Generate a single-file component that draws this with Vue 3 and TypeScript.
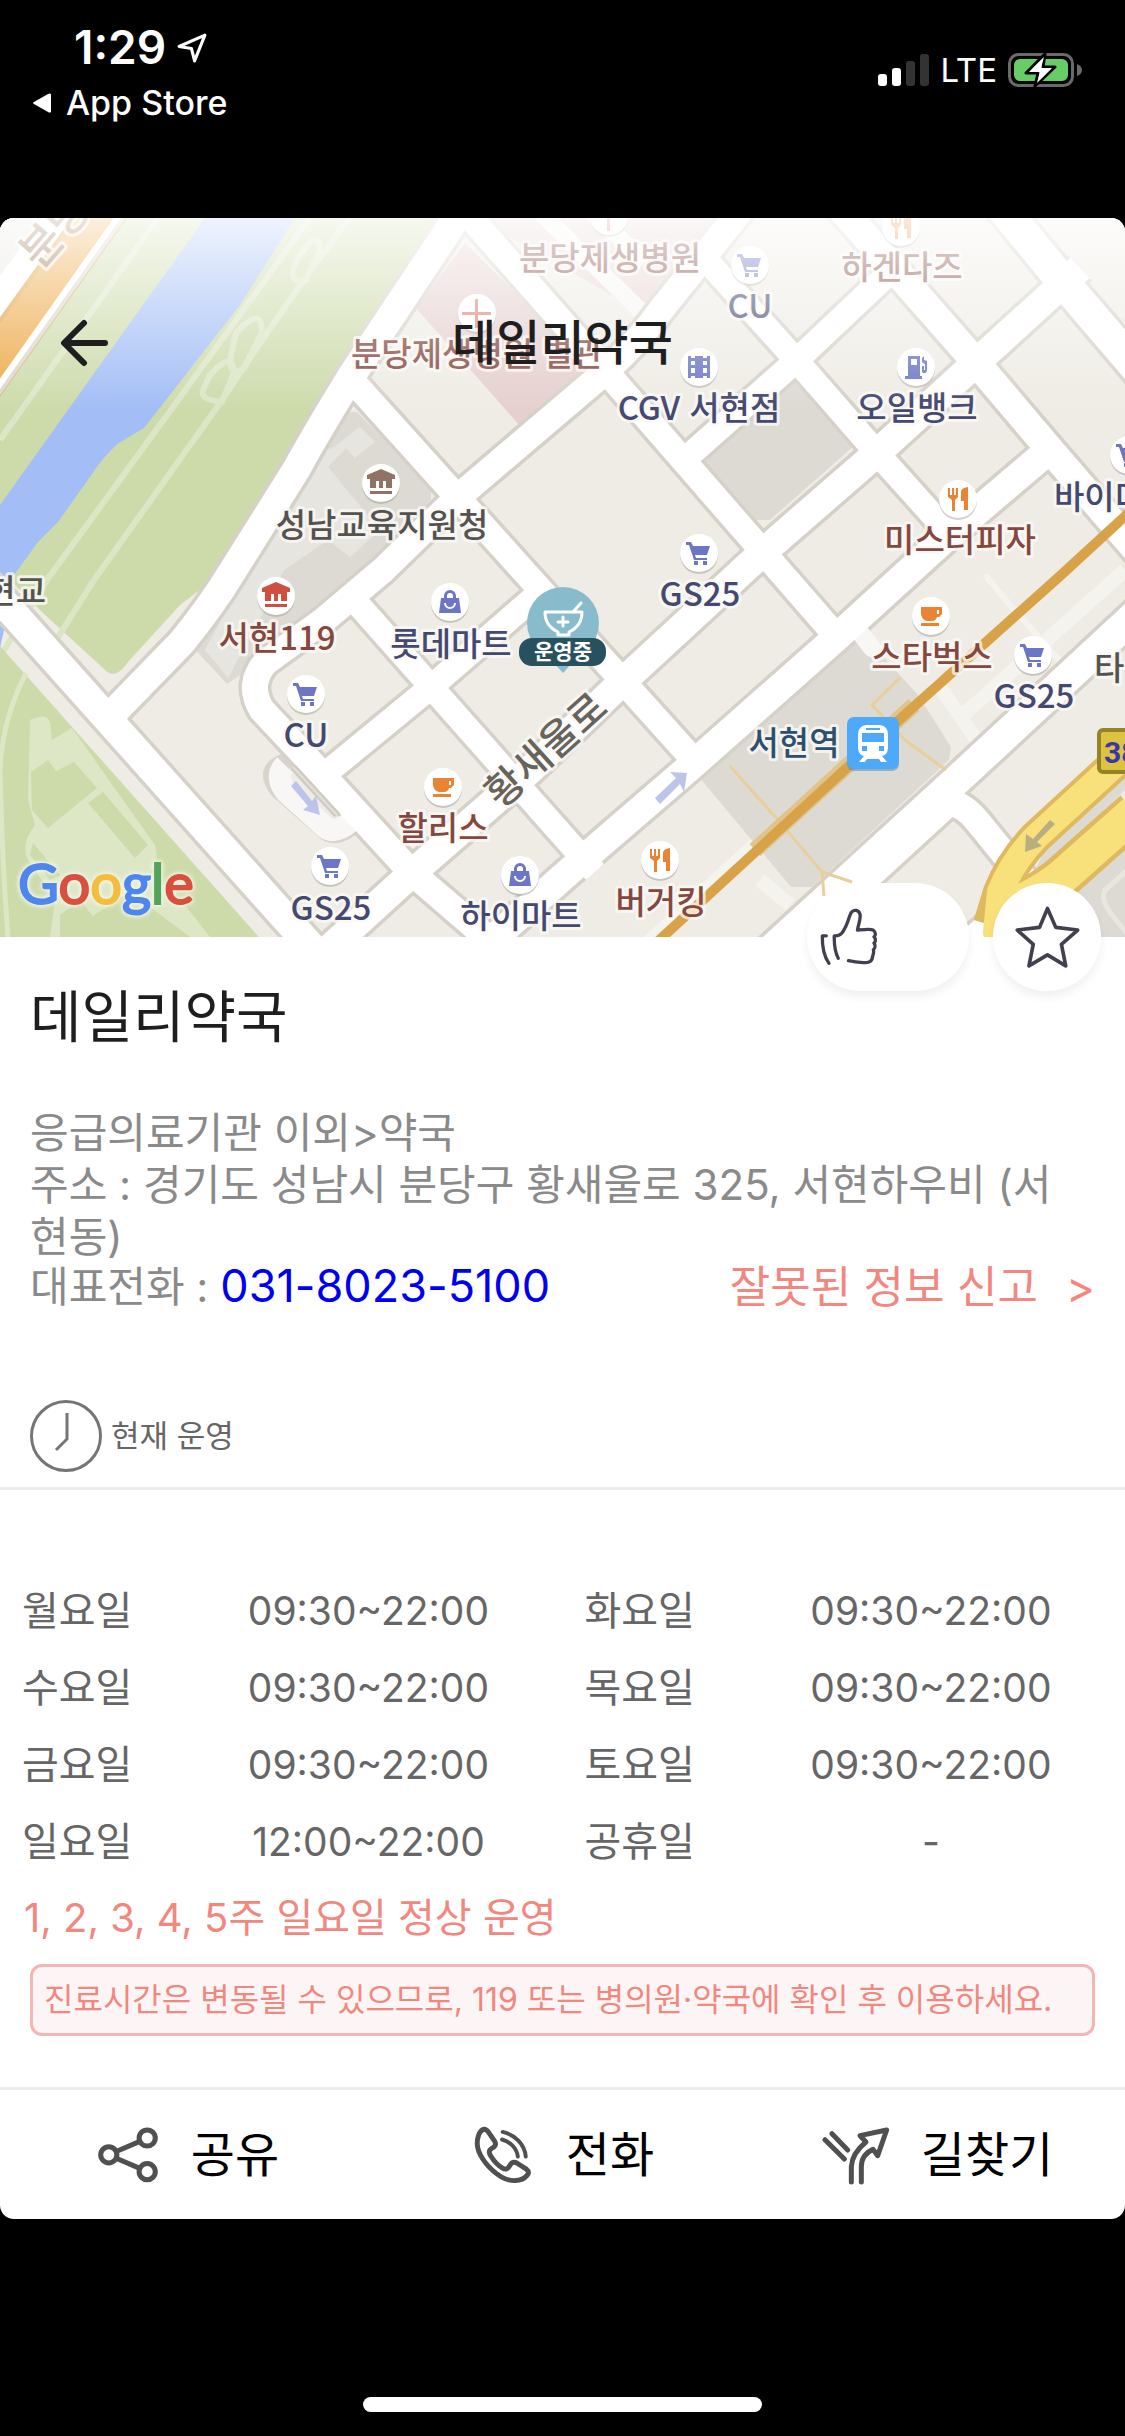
<script setup lang="ts">
type Kind = 'cart' | 'bag' | 'cup' | 'fork' | 'museum' | 'cross' | 'film' | 'gas'

interface Road {
  d: string
  w: number
}
interface Poi {
  kind: Kind
  x: number
  y: number
  color: string
}
interface Label {
  text: string
  x: number
  y: number
  color: string
  anchor?: 'start' | 'middle' | 'end'
}
interface DayHours {
  day: string
  time: string
}

const VIOLET = '#6c76c4'
const ORANGE = '#e98434'
const NAVY = '#45486f'
const BROWN = '#84483f'
const GRAY = '#55534e'

const icons: Record<Kind, string> = {
  cart: 'M-13-11h5l2 4h17l-3 9h-12l1 3h11v2h-13l-5-15h-3zM-5 8h4v4h-4zM4 8h4v4h-4z',
  bag: 'M-9-4h3v-2a6 6 0 0 1 12 0v2h3l2 15h-22zM-3-4h6v-2a3 3 0 0 0-6 0zM-6 1a6 6 0 0 0 12 0h-2a4 4 0 0 1-8 0z',
  cup: 'M-10-9h21v7l-3 3h-2q-1 4-5 4h-5q-5-1-6-7zM6-6v4h2v-4zM-10 7h18v3h-18z',
  fork: 'M-10-11h2v7h2v-7h2v7h2v-7h2v9l-3 3v11h-3v-11l-4-3zM10-12v23h-4v-9h-3v-9q0-4 7-5z',
  museum: 'M-14-8L0-14L14-8V-4H11V5H5V-2H2V5H-2V-2H-5V5H-11V-4H-14zM-11 8h22v3h-22z',
  cross: 'M-2-14h3v13h13v3h-13v13h-3v-13h-13v-3h13z',
  film: 'M-11-11h3v2h4v-2h8v2h4v-2h3v22h-3v-2h-4v2h-8v-2h-4v2h-3zM-8-6v4h4v-4zM-8 1v5h4v-5zM4-6v4h4v-4zM4 1v5h4v-5z',
  gas: 'M-8-11h12v20h2v3h-17v-3h3zM-5-8v6h6v-6zM6-9l2-2v4l3 1v10q-2 4-5 1v-6h2v4h1v-6l-3-2z',
}

const roads: Road[] = [
  { d: 'M465 205L352 375Q318 430 296 470L232 572Q212 605 182 642L114 712', w: 28 },
  { d: 'M-20 576L330 968', w: 29 },
  { d: 'M462 208L610 376L837 637', w: 25 },
  { d: 'M350 378L700 767', w: 25 },
  { d: 'M745 205L661 310Q640 340 605 372L458 497L383 570L324 620L266 662Q246 684 262 710L306 757L411 872L490 940', w: 26 },
  { d: 'M1080 268L877 453L762 553L619 685L528 772L411 874L310 966', w: 28 },
  { d: 'M330 770L431 687L545 588', w: 24 },
  { d: 'M356 602L595 872', w: 24 },
  { d: 'M1041 457L949 535L837 637L690 767L582 860L475 955', w: 28 },
  { d: 'M700 253L796 360L877 453L955 540', w: 24 },
  { d: 'M838 205L974 360L1046 445L1145 560', w: 28 },
  { d: 'M684 460L796 361L890 272', w: 24 },
  { d: 'M1000 205L1064 283L1140 372', w: 32 },
  { d: 'M1145 606L958 779L760 960', w: 30 },
  { d: 'M950 795L770 960', w: 36 },
  { d: 'M945 800Q965 805 978 822L1030 886', w: 26 },
  { d: 'M1040 880L960 950', w: 26 },
]

const pois: Poi[] = [
  { kind: 'cross', x: 609, y: 216, color: '#df8078' },
  { kind: 'cross', x: 477, y: 313, color: '#df8078' },
  { kind: 'cart', x: 750, y: 265, color: VIOLET },
  { kind: 'fork', x: 901, y: 227, color: ORANGE },
  { kind: 'film', x: 699, y: 367, color: VIOLET },
  { kind: 'gas', x: 916, y: 367, color: VIOLET },
  { kind: 'museum', x: 381, y: 483, color: '#917366' },
  { kind: 'fork', x: 958, y: 499, color: ORANGE },
  { kind: 'cart', x: 1129, y: 455, color: VIOLET },
  { kind: 'cart', x: 699, y: 553, color: VIOLET },
  { kind: 'museum', x: 276, y: 596, color: '#d0503f' },
  { kind: 'bag', x: 450, y: 602, color: VIOLET },
  { kind: 'cup', x: 931, y: 616, color: ORANGE },
  { kind: 'cart', x: 1033, y: 655, color: VIOLET },
  { kind: 'cart', x: 306, y: 694, color: VIOLET },
  { kind: 'cup', x: 443, y: 787, color: ORANGE },
  { kind: 'fork', x: 660, y: 860, color: ORANGE },
  { kind: 'cart', x: 330, y: 866, color: VIOLET },
  { kind: 'bag', x: 520, y: 875, color: VIOLET },
]

const labels: Label[] = [
  { text: '분당제생병원', x: 610, y: 270, color: BROWN },
  { text: '하겐다즈', x: 902, y: 279, color: BROWN },
  { text: 'CU', x: 750, y: 318, color: NAVY },
  { text: '분당제생병원 별관', x: 477, y: 366, color: BROWN },
  { text: 'CGV 서현점', x: 699, y: 420, color: NAVY },
  { text: '오일뱅크', x: 917, y: 420, color: NAVY },
  { text: '바이더', x: 1054, y: 509, color: NAVY, anchor: 'start' },
  { text: '성남교육지원청', x: 382, y: 537, color: GRAY },
  { text: '미스터피자', x: 960, y: 552, color: BROWN },
  { text: '서현교', x: 46, y: 603, color: GRAY, anchor: 'end' },
  { text: 'GS25', x: 700, y: 606, color: NAVY },
  { text: '서현119', x: 277, y: 650, color: BROWN },
  { text: '롯데마트', x: 451, y: 656, color: NAVY },
  { text: '스타벅스', x: 932, y: 669, color: BROWN },
  { text: '타', x: 1094, y: 680, color: GRAY, anchor: 'start' },
  { text: 'GS25', x: 1034, y: 708, color: NAVY },
  { text: 'CU', x: 306, y: 747, color: NAVY },
  { text: '서현역', x: 794, y: 755, color: '#2c4f6b' },
  { text: '할리스', x: 443, y: 840, color: BROWN },
  { text: '버거킹', x: 661, y: 914, color: BROWN },
  { text: 'GS25', x: 331, y: 920, color: NAVY },
  { text: '하이마트', x: 521, y: 928, color: NAVY },
]

const hours: [DayHours, DayHours][] = [
  [{ day: '월요일', time: '09:30~22:00' }, { day: '화요일', time: '09:30~22:00' }],
  [{ day: '수요일', time: '09:30~22:00' }, { day: '목요일', time: '09:30~22:00' }],
  [{ day: '금요일', time: '09:30~22:00' }, { day: '토요일', time: '09:30~22:00' }],
  [{ day: '일요일', time: '12:00~22:00' }, { day: '공휴일', time: '-' }],
]
</script>

<template>
  <div class="screen" lang="ko">
    <header class="status">
      <div class="status-left">
        <div class="clock">
          <span>1:29</span>
          <svg class="locate" viewBox="0 0 30 30" aria-hidden="true">
            <path d="M27 3L2 14L14 16L17 28Z" fill="none" stroke="#fff" stroke-width="3" stroke-linejoin="round" />
          </svg>
        </div>
        <a class="back-app" href="#">
          <svg class="back-tri" viewBox="0 0 20 20" aria-hidden="true"><path d="M19 1V19Q18 20 16 19L2 11Q0 10 2 9L16 1Q18 0 19 1Z" fill="#fff" /></svg>
          <span>App Store</span>
        </a>
      </div>
      <div class="status-right">
        <svg class="signal" viewBox="0 0 51 32" aria-hidden="true">
          <rect x="0" y="20" width="9" height="12" rx="3" fill="#fff" />
          <rect x="14" y="14" width="9" height="18" rx="3" fill="#fff" />
          <rect x="28" y="7" width="9" height="25" rx="3" fill="#333" />
          <rect x="42" y="0" width="9" height="32" rx="3" fill="#333" />
        </svg>
        <span class="lte">LTE</span>
        <svg class="battery" viewBox="0 0 74 34" aria-hidden="true">
          <rect x="1.5" y="1.5" width="63" height="31" rx="9" fill="none" stroke="#6a6a6a" stroke-width="3" />
          <path d="M69 11Q74 13 74 17Q74 21 69 23Z" fill="#6a6a6a" />
          <rect x="6" y="6" width="54" height="22" rx="6" fill="#67ce67" />
          <path d="M37 1L18 20H30L27 33L47 14H35Z" fill="#fff" stroke="#000" stroke-width="3" stroke-linejoin="round" />
          <path d="M36 4L21 19H32L29 30L44 15H33Z" fill="#fff" />
        </svg>
      </div>
    </header>

    <main class="card">
      <section class="map-area">
        <svg class="map" viewBox="0 218 1125 719" role="img" aria-label="지도">
          <defs>
            <linearGradient id="fade" x1="0" y1="0" x2="0" y2="1">
              <stop offset="0" stop-color="#fff" stop-opacity="0.82" />
              <stop offset="1" stop-color="#fff" stop-opacity="0" />
            </linearGradient>
          </defs>

          <rect x="0" y="218" width="1125" height="719" fill="#efece5" />

          <!-- park and river -->
          <path d="M100 218H460L352 375L226 570L180 605L128 662Q115 682 103 668L43 613L0 570V380Z" fill="#cddbab" />
          <path d="M0 218H90L0 330Z" fill="#e9e7e2" />
          <g fill="none" stroke="#dbe6c5" stroke-width="6">
            <path d="M158 218L0 440" />
            <path d="M310 218L173 407L47 580L-5 665" />
            <path d="M350 218L311 270L267 333L220 403L94 580L50 650" />
            <path d="M215 218L0 515" />
            <path d="M236 333Q262 305 262 332L244 368Q226 380 232 350Z" />
            <path d="M210 375Q232 350 234 372L222 402Q200 400 203 390Z" />
            <path d="M296 262Q318 225 320 250L306 280Q286 285 296 262Z" />
          </g>
          <path d="M205 218H295L240 305L144 428Q134 434 119 443Q104 455 90 477L58 522L38 542L14 575L0 598V505Z" fill="#a3bef6" />
          <path d="M112 200L-20 385" stroke="#dba23e" stroke-width="46" />
          <path d="M112 200L-20 385" stroke="#eda949" stroke-width="38" />
          <path d="M133 200L-12 405" stroke="#dcd6cf" stroke-width="9" />
          <path d="M130 200L-15 405" stroke="#fff" stroke-width="6" />
          <path d="M70 200L-10 310" stroke="#fff" stroke-width="24" />

          <path d="M0 646L259 937H0Z" fill="#cddbab" />
          <path d="M30 720Q46 712 50 722L52 740L72 728L155 845Q160 862 150 872L185 905L210 937H190L130 892L60 937H50L55 900L28 860Q20 845 35 825L28 800Z" fill="#dde7c5" />
          <path d="M31 772L48 760L56 771L74 762L97 788L48 828L32 810ZM88 803L103 792L148 845L135 858ZM33 843L60 875L50 880L30 855ZM60 915L80 900L100 925L85 937H60Z" fill="#cddbab" />
          <path d="M26 673Q2 720 0 770Q2 860 8 937" fill="none" stroke="#dde7c5" stroke-width="5" />
          <path d="M0 622L5 626L0 648Z" fill="#a3bef6" />

          <!-- building plots -->
          <path d="M342 412H357L431 487V500L350 580L292 640L227 684L191 645L240 560Z" fill="#dddad3" />
          <path d="M309 461L326 447L331 449L360 427L375 442L355 458L346 448L328 467L380 530L350 557L328 540L284 570L270 600L228 678L205 650L245 575L300 492Z" fill="#e7e5e0" />
          <path d="M796 377L855 445L770 520H755L699 463Z" fill="#dddad3" />
          <path d="M416 308L465 243L600 376L521 427Z" fill="#e5d0cf" />
          <path d="M476 218H720L706 262L645 314Z" fill="#e9d5d3" />
          <path d="M538 210L652 322M590 210L645 262" stroke="#f7f6f3" stroke-width="17" />

          <g fill="none" stroke="#f4f3ee" stroke-width="14">
            <path d="M1125 570L960 718M640 950L790 812" />
            <path d="M985 575L1010 605L1070 672" stroke-width="6" />
            <path d="M935 680L980 745M760 880L790 905" />
          </g>
          <path d="M699 777L855 636L877 650L918 695L951 747L949 760L812 887H791Z" fill="#dddad3" />
          <path d="M1125 842L1070 890L1092 937H1125ZM1125 790L1030 880L1060 820L1125 760Z" fill="#dddad3" />
          <path d="M1130 868L1105 890Q1100 900 1112 915L1130 937" fill="none" stroke="#e8e6e1" stroke-width="5" />

          <!-- streets -->
          <path d="M303 753L280 764Q264 772 278 790L326 832Q340 840 356 822" fill="none" stroke="#d9d4cb" stroke-width="17" />
          <g fill="none" stroke="#d6d1c8">
            <path v-for="(r, i) in roads" :key="'c' + i" :d="r.d" :stroke-width="r.w + 7" />
          </g>
          <path d="M285 765Q274 776 286 792L326 828Q336 834 350 822" fill="none" stroke="#f8f7f5" stroke-width="22" />
          <path d="M862 635L872 648" stroke="#f8f7f4" stroke-width="18" stroke-linecap="round" />
          <g fill="none" stroke="#fff">
            <path v-for="(r, i) in roads" :key="'r' + i" :d="r.d" :stroke-width="r.w" />
          </g>
          <path d="M293 767L337 815" stroke="#d0cbc2" stroke-width="7" />
          <path d="M293 767L337 815" stroke="#e4e0da" stroke-width="2" />

          <!-- expressway -->
          <g fill="none" stroke-linejoin="round">
            <path d="M1135 746L1036 837Q1012 862 1000 892L990 925" stroke="#dfb95f" stroke-width="34" />
            <path d="M1135 812L1064 875Q1045 892 1005 912" stroke="#dfb95f" stroke-width="44" />
            <path d="M1135 746L1036 837Q1012 862 1000 892L996 932" stroke="#f8e17b" stroke-width="26" stroke-linecap="round" />
            <path d="M1135 812L1064 875Q1045 892 1000 912" stroke="#f8e17b" stroke-width="35" />
          </g>
          <path d="M1030 890L1040 901L1021 909Z" fill="#fff" />

          <!-- subway line -->
          <g fill="none">
            <path d="M730 766L778 820L822 872L852 882M822 872L824 896M900 678L872 705L905 740L946 770" stroke="#e8cf9c" stroke-width="3" />
            <path d="M914 705L755 850" stroke="#e1c48c" stroke-width="16" />
            <path d="M1135 507L1060 576L899 720L655 944" stroke="#d8a348" stroke-width="10" />
          </g>

          <g fill="#bcc4ec">
            <path d="M655 798L676 778L670 772L687 773L684 792L680 784L660 804Z" />
            <path d="M291 786L308 806L303 810L320 815L316 796L312 801L296 781Z" />
          </g>
          <path d="M1050 820L1033 839L1026 834L1025 852L1042 846L1037 842L1055 824Z" fill="#b9ae80" />

          <g class="shield">
            <rect x="1099" y="730" width="60" height="42" rx="4" fill="#dcc440" stroke="#948327" stroke-width="4" />
            <text x="1104" y="763">38</text>
          </g>

          <!-- station -->
          <rect x="847" y="719" width="52" height="52" rx="7" fill="#3f86c6" opacity="0.5" />
          <rect x="847" y="717" width="52" height="52" rx="7" fill="#4eaaf8" />
          <path fill-rule="evenodd" fill="#fff" d="M866 725H880Q888 726 888 735V749Q887 755 882 756L887 762H881L879 759H867L865 762H859L864 756Q859 755 858 749V735Q858 726 866 725ZM862 733V742H884V733ZM862 746V751H867V746ZM879 746V751H884V746ZM866 728V730H880V728Z" />

          <g class="road-name">
            <text transform="translate(546 750) rotate(-42)" x="0" y="14">황새울로</text>
            <text class="tan" transform="translate(56 231) rotate(-49)" x="0" y="14">분당</text>
          </g>

          <g v-for="(p, i) in pois" :key="'p' + i" :transform="`translate(${p.x} ${p.y})`">
            <circle cy="2" r="19" fill="#9a968e" opacity="0.45" />
            <circle r="19" fill="#fff" />
            <path :d="icons[p.kind]" :fill="p.color" fill-rule="evenodd" />
          </g>
          <g class="labels">
            <text v-for="(l, i) in labels" :key="'l' + i" :x="l.x" :y="l.y" :fill="l.color" :text-anchor="l.anchor ?? 'middle'">{{ l.text }}</text>
          </g>

          <!-- selected pharmacy -->
          <path d="M553 662L563 673L573 662Z" fill="#88bccc" />
          <circle cx="563" cy="623" r="36" fill="#88bccc" />
          <g fill="none" stroke="#fff" stroke-width="3" stroke-linejoin="round" stroke-linecap="round">
            <path d="M545 612H582Q582 626 569 632V635H558V632Q545 626 545 612Z" />
            <path d="M574 611L581 603M563 617V626M558 622H568" />
          </g>
          <rect x="519" y="638" width="87" height="28" rx="13" fill="#285160" />
          <text class="pin-text" x="563" y="659">운영중</text>

          <text class="google" x="18" y="904">
            <tspan fill="#4f86ee" stroke="#4f86ee">G</tspan><tspan fill="#d9503f" stroke="#d9503f">o</tspan><tspan fill="#f3bd3e" stroke="#f3bd3e">o</tspan><tspan fill="#4f86ee" stroke="#4f86ee">g</tspan><tspan fill="#53a35a" stroke="#53a35a">l</tspan><tspan fill="#d9503f" stroke="#d9503f">e</tspan>
          </text>

          <rect x="0" y="218" width="1125" height="192" fill="url(#fade)" />
        </svg>

        <div class="topbar">
          <button class="back" type="button" aria-label="뒤로">
            <svg viewBox="0 0 48 48" aria-hidden="true">
              <path d="M45 24H5M24 4L4 24L24 44" fill="none" stroke="#1e1e1e" stroke-width="6" stroke-linecap="round" stroke-linejoin="round" />
            </svg>
          </button>
          <h1 class="top-title">데일리약국</h1>
        </div>

        <div class="floating">
          <button class="float like" type="button" aria-label="좋아요">
            <svg viewBox="120 130 175 175" aria-hidden="true">
              <g fill="none" stroke="#42404f" stroke-width="10" stroke-linecap="round" stroke-linejoin="round">
                <path d="M139 214H127Q126 268 147 297" />
                <path d="M175 282Q162 256 163 214C185 216 191 200 199 183C206 168 209 151 215 143C222 133 238 136 241 150C243 165 235 182 233 197C250 195 272 191 281 197C290 204 288 213 283 217C289 223 288 232 283 236C288 243 286 252 281 256C284 264 280 270 279 275C277 293 268 295 250 295Q226 294 206 289" />
              </g>
            </svg>
          </button>
          <button class="float star" type="button" aria-label="즐겨찾기">
            <svg viewBox="700 135 202 192" aria-hidden="true">
              <path d="M801 145L826 202L892 210L843 253L856 318L801 285L745 318L758 253L710 210L777 202Z" fill="none" stroke="#42404f" stroke-width="11" stroke-linejoin="round" />
            </svg>
          </button>
        </div>
      </section>

      <section class="info">
        <h2 class="name">데일리약국</h2>
        <p class="line">응급의료기관 이외&gt;약국</p>
        <p class="line">주소 : 경기도 성남시 분당구 황새울로 325, 서현하우비 (서현동)</p>
        <div class="tel-row">
          <p class="tel">대표전화 : <a href="tel:031-8023-5100">031-8023-5100</a></p>
          <a class="report" href="#"><span>잘못된 정보 신고</span><span>&gt;</span></a>
        </div>
      </section>

      <div class="state">
        <svg class="state-clock" viewBox="0 0 72 72" aria-hidden="true">
          <g fill="none" stroke="#757575" stroke-width="3">
            <circle cx="36" cy="36" r="34.5" />
            <path d="M37 13V39L26 50" />
          </g>
        </svg>
        <span>현재 운영</span>
      </div>

      <section class="schedule">
        <table class="hours">
          <colgroup>
            <col class="c-day" /><col class="c-time" /><col class="c-day" /><col class="c-time" />
          </colgroup>
          <tbody>
            <tr v-for="row in hours" :key="row[0].day">
              <template v-for="cell in row" :key="cell.day">
                <th scope="row">{{ cell.day }}</th>
                <td>{{ cell.time }}</td>
              </template>
            </tr>
          </tbody>
        </table>
        <p class="weeks">1, 2, 3, 4, 5주 일요일 정상 운영</p>
        <p class="notice">진료시간은 변동될 수 있으므로, 119 또는 병의원·약국에 확인 후 이용하세요.</p>
      </section>

      <nav class="actions">
        <button type="button">
          <svg viewBox="105 70 190 175" aria-hidden="true">
            <g fill="none" stroke="#505050" stroke-width="15">
              <circle cx="143" cy="157" r="24" />
              <circle cx="257" cy="107" r="24" />
              <circle cx="257" cy="207" r="24" />
              <path d="M165 147L235 117M165 167L235 197" />
            </g>
          </svg>
          <span>공유</span>
        </button>
        <button type="button">
          <svg viewBox="1238 66 182 182" aria-hidden="true">
            <g fill="none" stroke="#505050" stroke-width="15" stroke-linecap="round" stroke-linejoin="round">
              <path d="M1272 79C1279 78 1283 85 1288 92L1304 116C1310 127 1303 133 1295 137C1284 143 1287 152 1292 160C1302 176 1315 190 1328 197C1338 203 1345 198 1349 190C1355 178 1362 176 1372 182L1400 200C1409 207 1407 213 1402 219C1385 240 1350 238 1325 224C1290 203 1258 165 1252 133C1248 110 1256 82 1272 79Z" />
              <path d="M1328 87C1365 95 1395 125 1398 162M1326 110C1352 117 1372 138 1374 162" stroke-width="12" />
            </g>
          </svg>
          <span>전화</span>
        </button>
        <button type="button">
          <svg class="route" viewBox="78 72 204 176" aria-hidden="true">
            <g fill="none" stroke="#505050" stroke-width="15" stroke-linecap="round" stroke-linejoin="round">
              <path d="M108 96L155 145M87 114L145 172" />
              <path d="M166 241V195Q168 155 210 121L192 102L272 85L245 162L231 143Q196 160 196 195V241" />
            </g>
          </svg>
          <span>길찾기</span>
        </button>
      </nav>
    </main>

    <div class="home-bar"></div>
  </div>
</template>

<style>
body {
  margin: 0;
  background: #000;
}
</style>

<style scoped>
.screen {
  display: flex;
  flex-direction: column;
  min-height: 100vh;
  box-sizing: border-box;
  padding-bottom: 24px;
  background: #000;
  color: #666;
  font-family: Inter, 'Noto Sans CJK KR', sans-serif;
}
h1,
h2,
p {
  margin: 0;
  font-weight: 400;
}
button {
  border: 0;
  padding: 0;
  background: none;
  font: inherit;
  color: inherit;
}
svg {
  display: block;
  flex: none;
}

.status {
  display: flex;
  justify-content: space-between;
  align-items: flex-start;
  height: 218px;
  color: #fff;
}
.status-left {
  padding: 19px 0 0 32px;
}
.clock {
  display: flex;
  align-items: center;
  gap: 11px;
  padding-left: 42px;
  font-size: 46px;
  line-height: 56px;
  font-weight: 600;
}
.locate {
  width: 31px;
  height: 31px;
}
.back-app {
  display: flex;
  align-items: center;
  gap: 14px;
  margin-top: 6px;
  color: #fff;
  font-size: 34px;
  line-height: 44px;
  font-weight: 500;
  text-decoration: none;
}
.back-tri {
  width: 20px;
  height: 20px;
}
.status-right {
  display: flex;
  align-items: center;
  gap: 11px;
  padding: 48px 43px 0 0;
}
.signal {
  width: 51px;
  height: 32px;
}
.lte {
  font-size: 33px;
  line-height: 44px;
}
.battery {
  width: 74px;
  height: 34px;
}

.card {
  border-radius: 14px;
  background: #fff;
}
.map-area {
  position: relative;
}
.map {
  width: 100%;
  height: auto;
  border-radius: 14px 14px 0 0;
}
.labels text,
.road-name text {
  font-family: 'Noto Sans CJK KR', sans-serif;
  font-size: 33px;
  font-weight: 500;
  paint-order: stroke;
  stroke: #fbfaf7;
  stroke-width: 6px;
  stroke-opacity: 0.75;
  stroke-linejoin: round;
}
.road-name text {
  font-size: 40px;
  text-anchor: middle;
  fill: #68645b;
}
.road-name .tan {
  font-size: 44px;
  fill: #93704f;
}
.shield text {
  font-family: Roboto, sans-serif;
  font-size: 30px;
  font-weight: 700;
  fill: #3b35a8;
}
.pin-text {
  font-family: 'Noto Sans CJK KR', sans-serif;
  font-size: 21px;
  font-weight: 700;
  text-anchor: middle;
  fill: #fff;
}
.google {
  font-family: Lato, sans-serif;
  font-size: 56px;
  stroke-width: 2px;
  filter: drop-shadow(0 0 2px #f2f6e8) drop-shadow(0 0 2px #f2f6e8);
}
.topbar {
  position: absolute;
  inset: 0 0 auto;
  display: grid;
  grid-template-columns: 120px 1fr 120px;
  align-items: center;
  height: 250px;
}
.back {
  justify-self: start;
  margin-left: 60px;
}
.back svg {
  width: 48px;
  height: 48px;
}
.top-title {
  color: #1e1e1e;
  font-size: 48px;
  line-height: 64px;
  font-weight: 500;
  text-align: center;
}
.floating {
  position: absolute;
  right: 24px;
  bottom: -54px;
  display: flex;
  gap: 24px;
}
.float {
  display: flex;
  align-items: center;
  height: 108px;
  border-radius: 54px;
  background: #fff;
  box-shadow: 0 6px 10px rgba(0, 0, 0, 0.06);
}
.like {
  width: 162px;
  padding-left: 13px;
}
.like svg {
  width: 58px;
  height: 58px;
}
.star {
  width: 108px;
  justify-content: center;
}
.star svg {
  width: 67px;
  height: 64px;
}

.info {
  padding: 48px 30px 0;
}
.name {
  margin-bottom: 58px;
  color: #1e1e1e;
  font-size: 56px;
  line-height: 64px;
}
.line {
  padding-right: 20px;
  color: #8a8a8a;
  font-size: 42px;
  line-height: 52px;
}
.tel-row {
  display: flex;
  justify-content: space-between;
  align-items: center;
}
.tel {
  color: #8a8a8a;
  font-size: 42px;
  line-height: 46px;
}
.tel a {
  color: #0000ee;
  font-size: 45px;
  text-decoration: none;
}
.report {
  display: flex;
  gap: 28px;
  color: #f1877f;
  font-size: 44px;
  line-height: 46px;
  text-decoration: none;
}

.state {
  display: flex;
  align-items: center;
  gap: 9px;
  margin-top: 90px;
  padding: 0 30px 15px;
  border-bottom: 3px solid #ececec;
  font-size: 31px;
  line-height: 40px;
}
.state-clock {
  width: 72px;
  height: 72px;
}

.schedule {
  padding: 82px 0 51px;
  border-bottom: 3px solid #ececec;
}
.hours {
  width: 100%;
  border-collapse: collapse;
  table-layout: fixed;
  font-size: 40px;
  line-height: 48px;
}
.c-day {
  width: 15.5%;
}
.c-time {
  width: 34.5%;
}
.hours th,
.hours td {
  height: 77px;
  padding: 0;
  font-weight: 400;
  text-align: center;
}
.hours th {
  padding-left: 22px;
  text-align: left;
}
.hours td {
  font-size: 39px;
}
.weeks {
  padding: 12px 24px 0;
  color: #f1877f;
  font-size: 40px;
  line-height: 52px;
}
.notice {
  margin: 20px 30px 0;
  padding: 12px 11px;
  border: 3px solid #f5b5b3;
  border-radius: 12px;
  background: #fbf6f5;
  color: #f1877f;
  font-size: 32px;
  line-height: 42px;
}

.actions {
  display: grid;
  grid-template-columns: repeat(3, 1fr);
  height: 129px;
  color: #000;
}
.actions button {
  display: flex;
  align-items: center;
  justify-content: center;
  gap: 31px;
  font-size: 48px;
  line-height: 64px;
}
.actions svg {
  width: 64px;
  height: 60px;
}
.actions .route {
  width: 68px;
}
.home-bar {
  width: 35.4%;
  height: 15px;
  margin: auto auto 0;
  border-radius: 8px;
  background: #fff;
}
</style>
